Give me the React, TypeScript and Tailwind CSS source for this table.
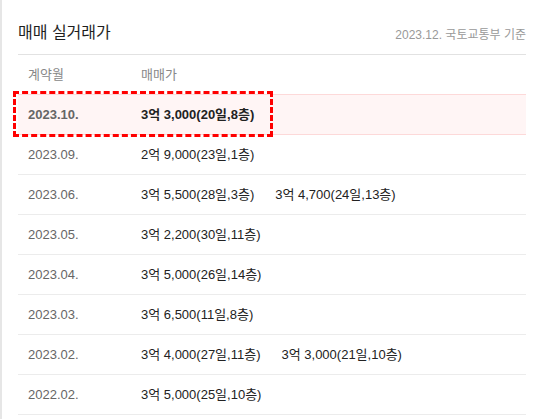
const rows: { month: string; deals: string[]; hot?: boolean }[] = [
  { month: '2023.10.', deals: ['3억 3,000(20일,8층)'], hot: true },
  { month: '2023.09.', deals: ['2억 9,000(23일,1층)'] },
  { month: '2023.06.', deals: ['3억 5,500(28일,3층)', '3억 4,700(24일,13층)'] },
  { month: '2023.05.', deals: ['3억 2,200(30일,11층)'] },
  { month: '2023.04.', deals: ['3억 5,000(26일,14층)'] },
  { month: '2023.03.', deals: ['3억 6,500(11일,8층)'] },
  { month: '2023.02.', deals: ['3억 4,000(27일,11층)', '3억 3,000(21일,10층)'] },
  { month: '2022.02.', deals: ['3억 5,000(25일,10층)'] },
]

export default function App() {
  return (
    <div
      className="min-h-[419px] bg-white border-l-2 border-[#e6e6e6] pl-4 pr-[11px] text-[13px]"
      style={{ fontFamily: '"Liberation Sans", "Noto Sans CJK KR", sans-serif' }}
    >
      <div className="flex items-center justify-between pt-[22px] pb-[10px] border-b border-[#e2e2e2]">
        <h2 className="text-[16px] leading-[22px] text-[#1e1e1e]">매매 실거래가</h2>
        <span className="text-[12px] leading-[22px] text-[#999] translate-y-[2px]">2023.12. 국토교통부 기준</span>
      </div>

      <div className="flex h-[39px] items-center text-[#888]">
        <div className="w-[123px] pl-[10px]">계약월</div>
        <div>매매가</div>
      </div>

      {rows.map(r => (
        <div
          key={r.month}
          className={
            r.hot
              ? 'relative flex h-[41px] items-center border-y border-[#fdd9d9] bg-[#fff5f5] font-bold'
              : 'flex h-[40px] items-center border-b border-[#ececec]'
          }
        >
          <div className="w-[123px] pl-[10px] text-[#666]">{r.month}</div>
          <div className="flex gap-[21px] text-[#222]">
            {r.deals.map(d => (
              <span key={d}>{d}</span>
            ))}
          </div>
          {r.hot && (
            <div className="absolute left-[-5px] top-[-4px] w-[260px] h-[46px] border-[3px] border-dashed border-[#f00]" />
          )}
        </div>
      ))}
    </div>
  )
}
